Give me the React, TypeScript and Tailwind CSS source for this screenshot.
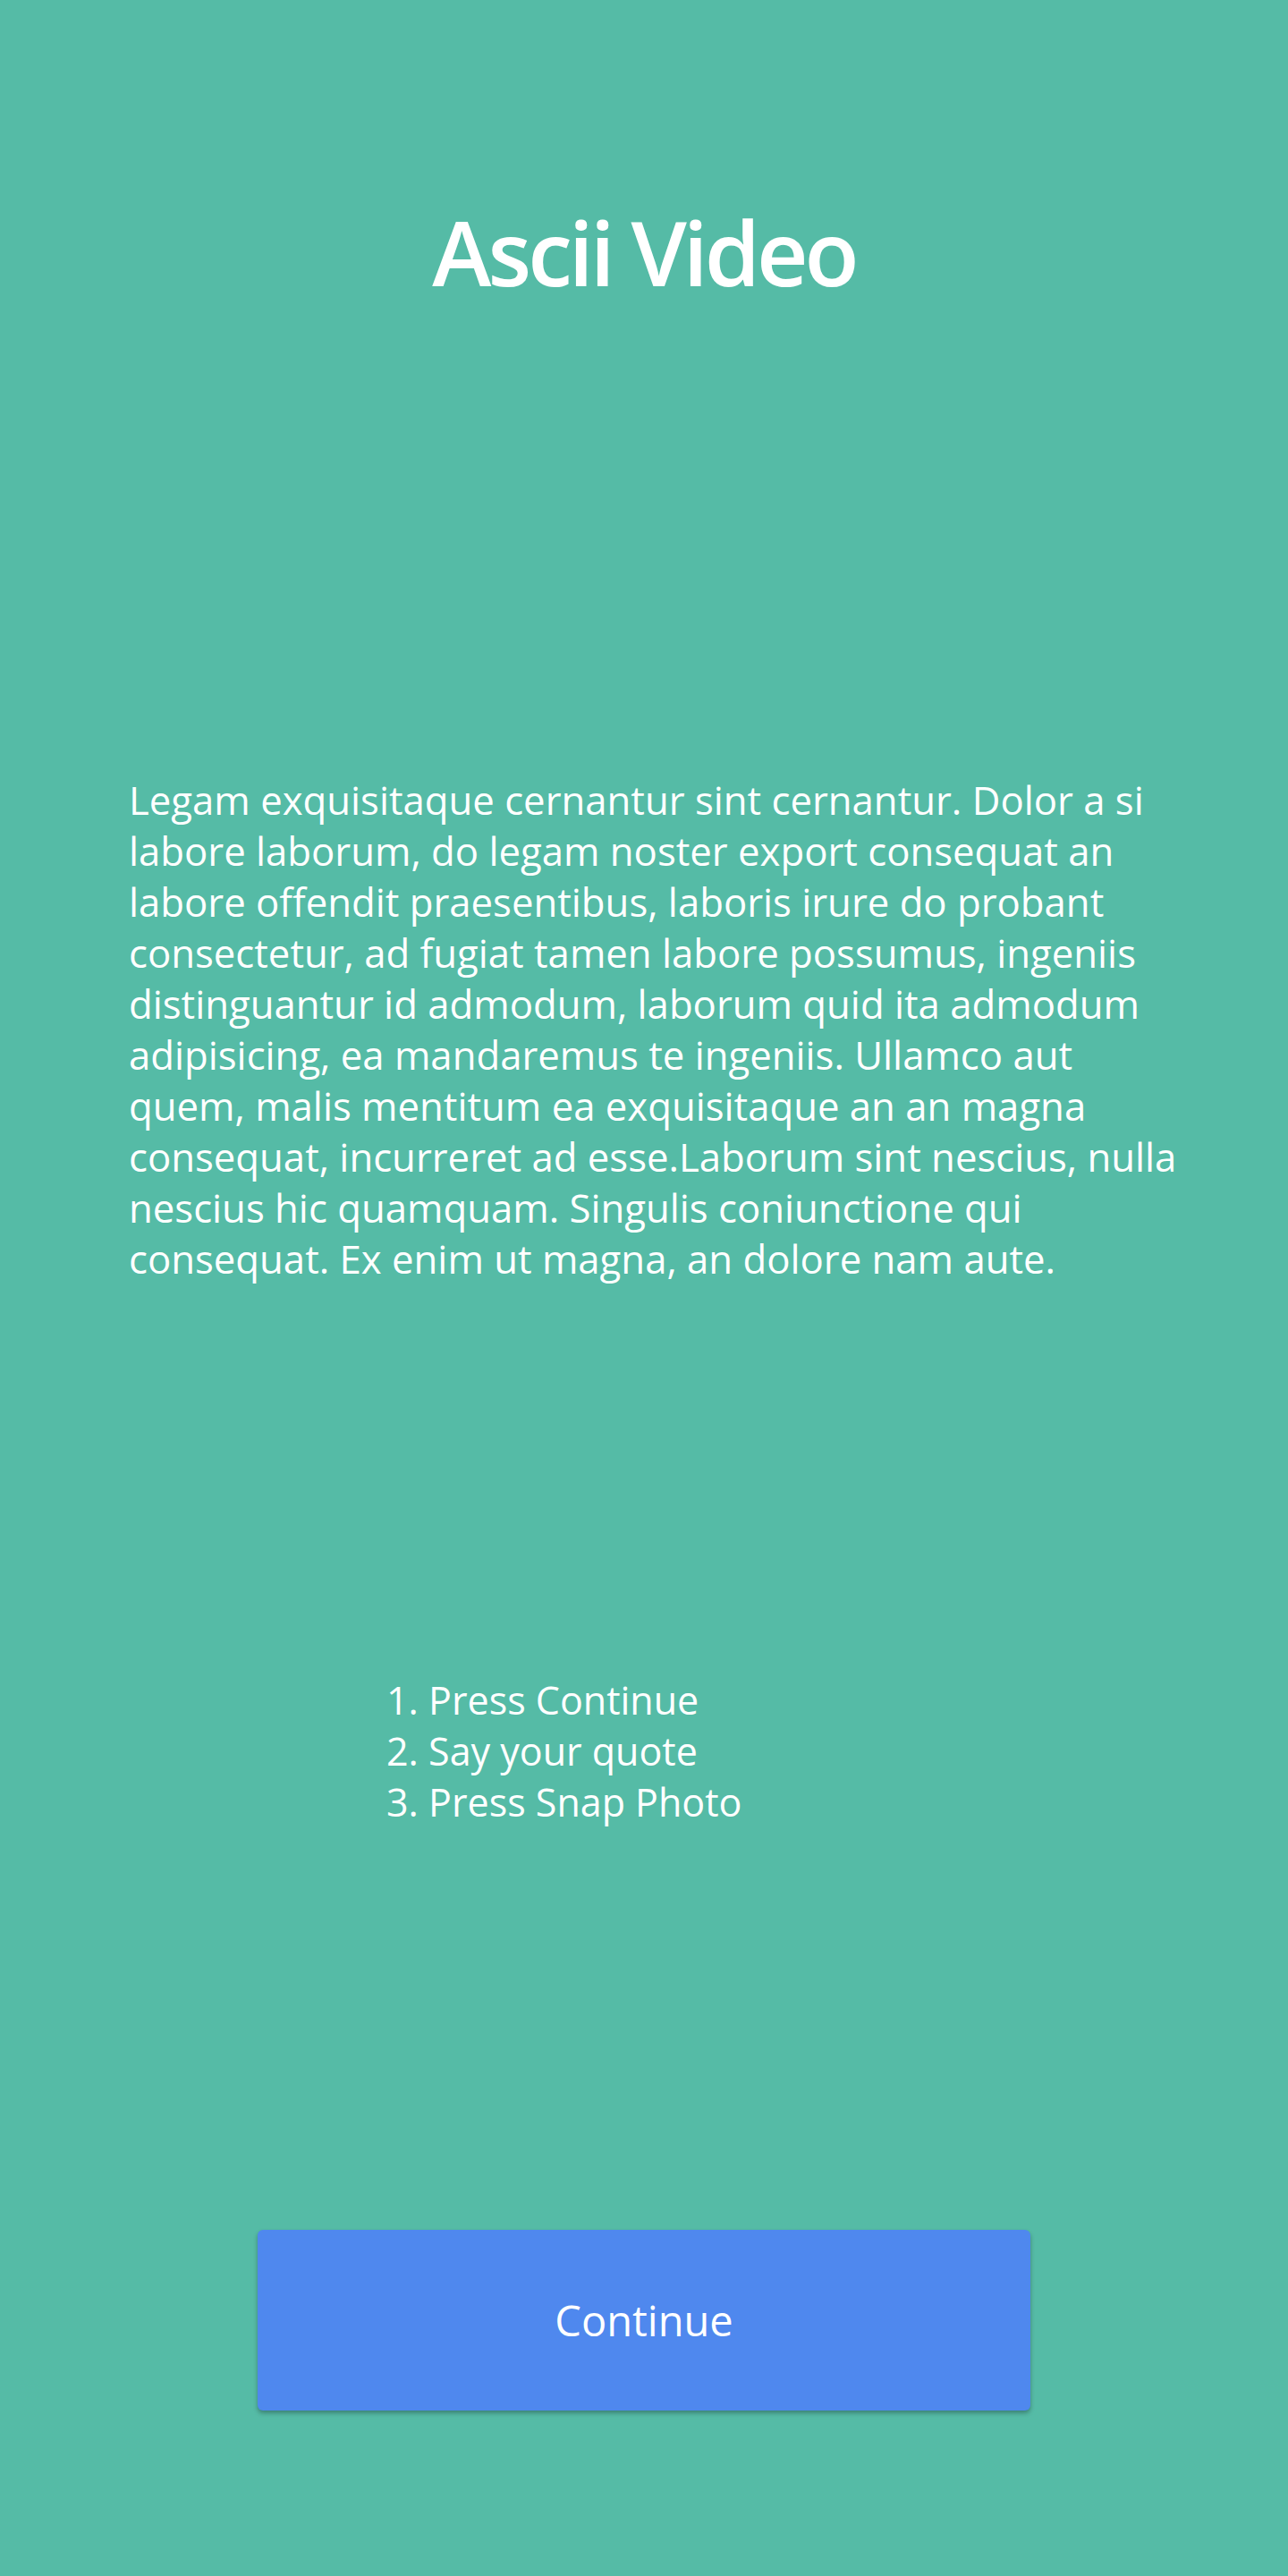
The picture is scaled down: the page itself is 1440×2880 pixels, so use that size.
import React from "react";

const steps = ["Press Continue", "Say your quote", "Press Snap Photo"];

const intro =
  "Legam exquisitaque cernantur sint cernantur. Dolor a si labore laborum, do legam noster export consequat an labore offendit praesentibus, laboris irure do probant consectetur, ad fugiat tamen labore possumus, ingeniis distinguantur id admodum, laborum quid ita admodum adipisicing, ea mandaremus te ingeniis. Ullamco aut quem, malis mentitum ea exquisitaque an an magna consequat, incurreret ad esse.Laborum sint nescius, nulla nescius hic quamquam. Singulis coniunctione qui consequat. Ex enim ut magna, an dolore nam aute.";

export default function App() {
  return (
    <div
      className="flex min-h-[2880px] w-full flex-col bg-[#55bba6] text-white"
      style={{ fontFamily: '"Open Sans", "Liberation Sans", sans-serif' }}
    >
      {/* title */}
      <h1 className="mt-[221px] text-center text-[100px] font-semibold leading-[120px] tracking-[-0.04em]">
        Ascii Video
      </h1>

      {/* intro text */}
      <p className="ml-[144px] mr-[112px] mt-[525px] text-[43.7px] leading-[57px]">{intro}</p>

      {/* steps */}
      <ol className="ml-[30%] mt-[436px] list-inside list-decimal text-[43px] leading-[57px]">
        {steps.map((s) => (
          <li key={s}>{s}</li>
        ))}
      </ol>

      {/* action */}
      <div className="mt-[450px] flex justify-center">
        <button className="h-[202px] w-[60%] rounded-md bg-[#4f88ee] text-[47px] text-white shadow-[0_3px_5px_rgba(0,0,0,0.3)]">
          Continue
        </button>
      </div>
    </div>
  );
}
